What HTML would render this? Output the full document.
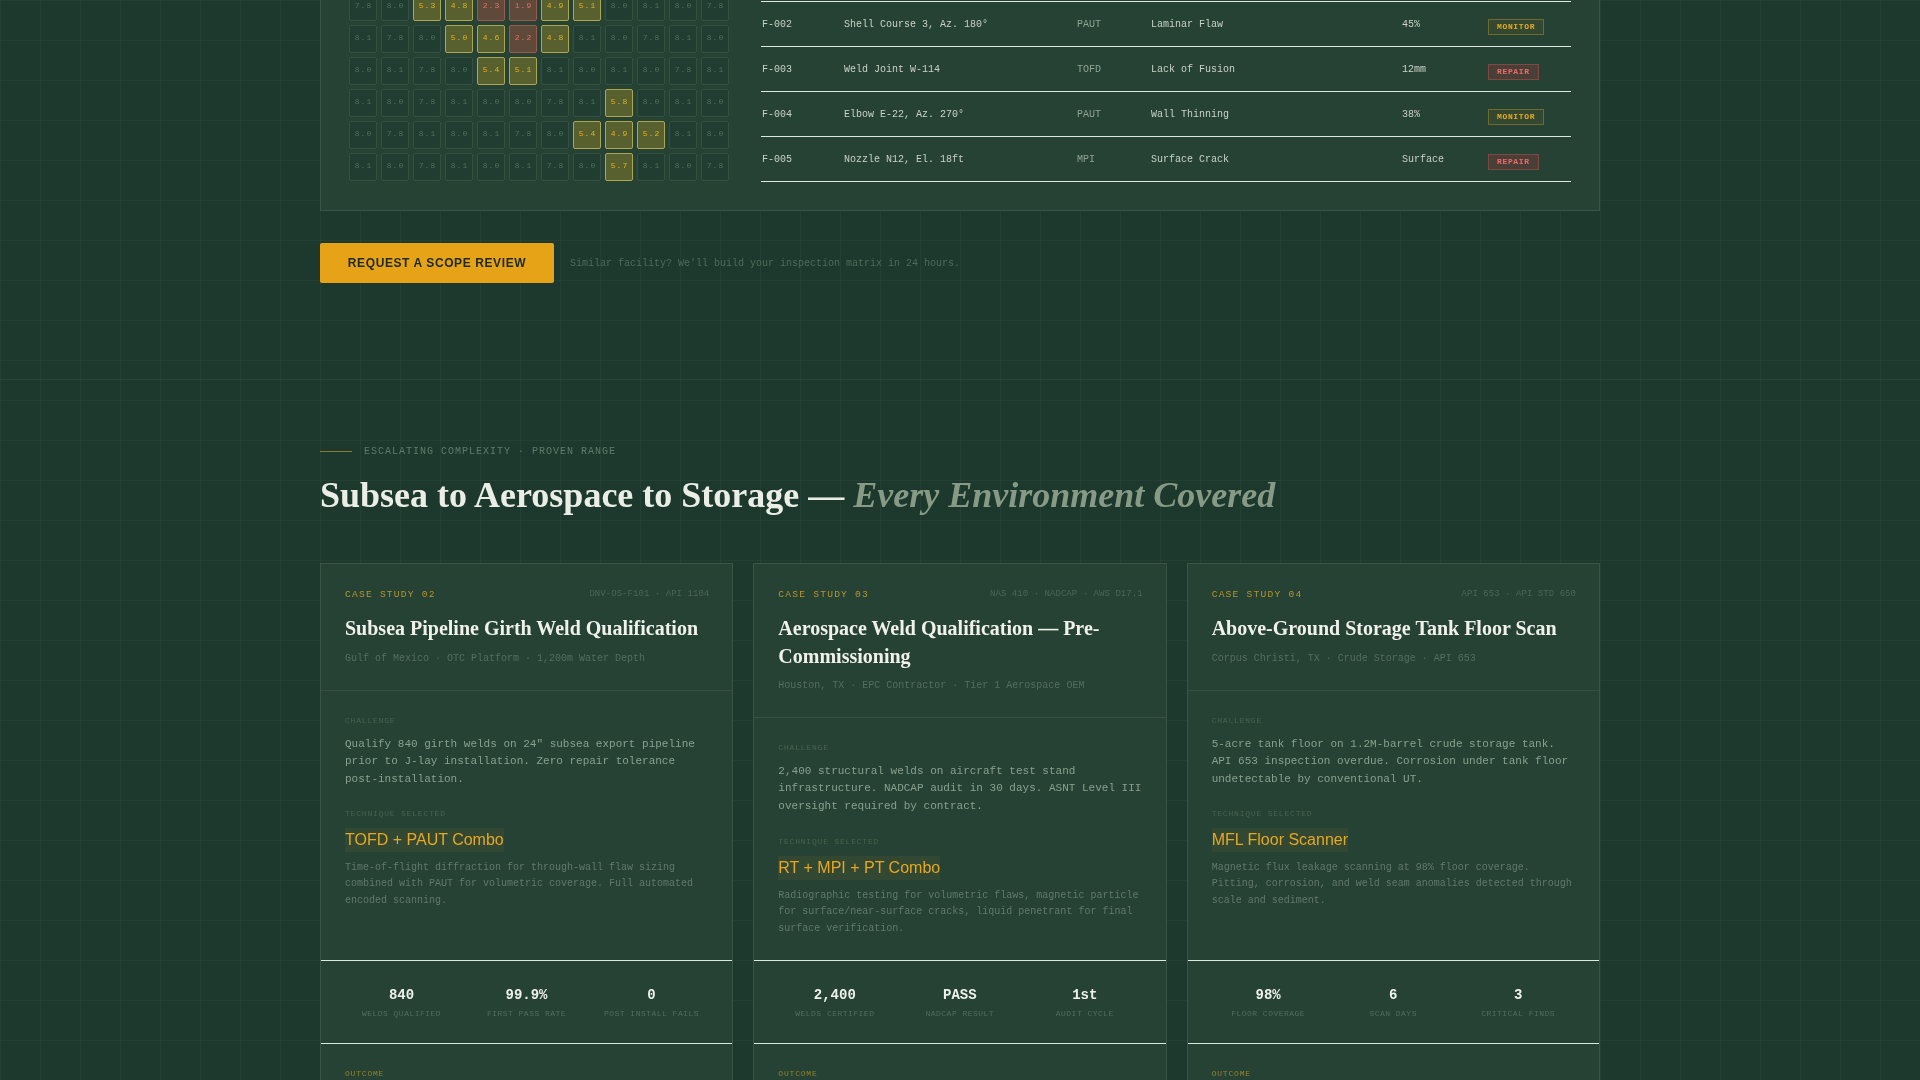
<!DOCTYPE html>
<html lang="en">
<head>
<meta charset="utf-8">
<title>NDT Case Studies</title>
<style>
*{box-sizing:border-box;margin:0;padding:0}
html,body{width:1920px;height:1080px;overflow:hidden}
body{
  background-color:#1d392d;
  background-image:
    linear-gradient(rgba(232,236,228,0.035) 1px,transparent 1px),
    linear-gradient(90deg,rgba(232,236,228,0.035) 1px,transparent 1px);
  background-size:40px 40px;
  font-family:"Liberation Mono",monospace;
  color:#e8ece4;
  position:relative;
}
#root{position:absolute;left:0;top:0;width:1920px;height:1080px;overflow:hidden;will-change:transform}
.abs{position:absolute}
/* ---------- top panel ---------- */
.panel{left:320px;top:-60px;width:1280px;height:271px;background:#264234;border:1px solid #3a5446}
.hm{left:349px;top:-7px;width:380px;display:grid;grid-template-columns:repeat(12,28px);grid-auto-rows:28px;gap:4px}
.hm i{display:block;font-style:normal;border:1px solid #35503f;background:#213c30;border-radius:2px;font-size:8px;letter-spacing:1.1px;text-indent:1px;line-height:24.5px;text-align:center;color:#4f6e5d}
.hm i.y{background:#586030;border-color:#aca64e;color:#e3b023}
.hm i.r{background:#5e493a;border-color:#9c5a4e;color:#e2716c}
/* table */
.tbl{left:761px;top:1px;width:810px}
.tr{position:relative;height:45px;border-top:1px solid #dbe9df;font-size:10px;line-height:12px;color:#c9d2c6}
.tr:last-child{height:46px;border-bottom:1px solid #dbe9df}
.tr span{position:absolute;top:17px;white-space:nowrap}
.c1{left:1px}.c2{left:83px}.c3{left:316px;color:#8fa393}.c4{left:390px}.c5{left:641px}
.tr b{position:absolute;left:727px;top:17px;height:16px;padding:0 8px;font-size:8px;line-height:14px;letter-spacing:.64px;border:1px solid;font-weight:bold}
.mon{color:#e8a81e;border-color:#6f6b30!important;background:#34482f}
.rep{color:#ee6a6a;border-color:#7e4942!important;background:#4a3f37}
/* ---------- CTA ---------- */
.btn{left:320px;top:243px;width:234px;height:40px;background:#e7a318;border-radius:2px;color:#1c2a22;font-family:"Liberation Sans",sans-serif;font-weight:bold;font-size:12px;line-height:40px;text-align:center;letter-spacing:.6px}
.note{left:570px;top:257px;font-size:10px;line-height:14px;color:#4e6a5a;white-space:nowrap}
/* ---------- heading ---------- */
.rule{left:320px;top:451px;width:32px;height:1px;background:#8a7a2a}
.eyebrow{left:364px;top:445px;font-size:10px;line-height:14px;letter-spacing:1px;color:#5f7a6a;white-space:nowrap}
h2{left:320px;top:472px;font-family:"Liberation Serif",serif;font-weight:bold;font-size:36px;line-height:46px;color:#ebeee6;white-space:nowrap}
h2 em{color:#879a86;font-style:italic}
/* ---------- cards ---------- */
.card{top:563px;width:413.34px;height:560px;background:#264234;border:1px solid #3a5446}
.k1{left:320px}.k2{left:753.33px}.k3{left:1186.67px}
.card .cs{left:24px;top:25px;font-size:9.6px;line-height:12px;letter-spacing:1.22px;color:#b5952a;white-space:nowrap}
.card .std{right:23px;top:24px;font-size:9px;line-height:12px;letter-spacing:.05px;color:#4a6555;white-space:nowrap}
.card h3{left:24px;top:50px;width:364px;font-family:"Liberation Serif",serif;font-weight:bold;font-size:20px;line-height:28px;color:#f0f2ea}
.card .loc{left:24px;font-size:10px;line-height:14px;color:#536e5f;white-space:nowrap}
.card .hr{left:0;right:0;height:1px;background:#35503f}
.card .lab{left:24px;font-size:8px;line-height:10px;letter-spacing:.8px;color:#47624f;white-space:nowrap}
.card .ch{left:24px;width:364px;font-size:11px;line-height:17.6px;color:#88a08e}
.card .tn{left:24px;font-family:"Liberation Sans",sans-serif;font-size:16px;line-height:24px;color:#e6a822;background:rgba(232,166,30,.065);white-space:nowrap}
.card .td{left:24px;width:364px;font-size:10px;line-height:16.3px;color:#60796a}
.card .bl{left:0;right:0;height:1px;background:#dbe9df}
.st{top:397px;left:24px;width:363px;height:83px;display:grid;grid-template-columns:repeat(3,1fr);column-gap:12px}
.st div{text-align:center;padding-top:26px;min-width:0}
.st b{display:block;font-size:14px;line-height:16px;color:#eef1ea;font-weight:bold}
.st u{display:block;text-decoration:none;font-size:8px;line-height:10px;letter-spacing:.48px;color:#4f6d5c;margin-top:6px;white-space:nowrap}
.card .out{left:24px;top:505px;font-size:8px;line-height:10px;letter-spacing:.8px;color:#94822c}
</style>
</head>
<body>
<div id="root">

<div class="abs panel"></div>
<div class="abs hm">
<i>7.8</i><i>8.0</i><i class="y">5.3</i><i class="y">4.8</i><i class="r">2.3</i><i class="r">1.9</i><i class="y">4.9</i><i class="y">5.1</i><i>8.0</i><i>8.1</i><i>8.0</i><i>7.8</i>
<i>8.1</i><i>7.8</i><i>8.0</i><i class="y">5.0</i><i class="y">4.6</i><i class="r">2.2</i><i class="y">4.8</i><i>8.1</i><i>8.0</i><i>7.8</i><i>8.1</i><i>8.0</i>
<i>8.0</i><i>8.1</i><i>7.8</i><i>8.0</i><i class="y">5.4</i><i class="y">5.1</i><i>8.1</i><i>8.0</i><i>8.1</i><i>8.0</i><i>7.8</i><i>8.1</i>
<i>8.1</i><i>8.0</i><i>7.8</i><i>8.1</i><i>8.0</i><i>8.0</i><i>7.8</i><i>8.1</i><i class="y">5.8</i><i>8.0</i><i>8.1</i><i>8.0</i>
<i>8.0</i><i>7.8</i><i>8.1</i><i>8.0</i><i>8.1</i><i>7.8</i><i>8.0</i><i class="y">5.4</i><i class="y">4.9</i><i class="y">5.2</i><i>8.1</i><i>8.0</i>
<i>8.1</i><i>8.0</i><i>7.8</i><i>8.1</i><i>8.0</i><i>8.1</i><i>7.8</i><i>8.0</i><i class="y">5.7</i><i>8.1</i><i>8.0</i><i>7.8</i>
</div>
<div class="abs tbl">
<div class="tr"><span class="c1">F-002</span><span class="c2">Shell Course 3, Az. 180°</span><span class="c3">PAUT</span><span class="c4">Laminar Flaw</span><span class="c5">45%</span><b class="mon">MONITOR</b></div>
<div class="tr"><span class="c1">F-003</span><span class="c2">Weld Joint W-114</span><span class="c3">TOFD</span><span class="c4">Lack of Fusion</span><span class="c5">12mm</span><b class="rep">REPAIR</b></div>
<div class="tr"><span class="c1">F-004</span><span class="c2">Elbow E-22, Az. 270°</span><span class="c3">PAUT</span><span class="c4">Wall Thinning</span><span class="c5">38%</span><b class="mon">MONITOR</b></div>
<div class="tr"><span class="c1">F-005</span><span class="c2">Nozzle N12, El. 18ft</span><span class="c3">MPI</span><span class="c4">Surface Crack</span><span class="c5">Surface</span><b class="rep">REPAIR</b></div>
</div>

<div class="abs btn">REQUEST A SCOPE REVIEW</div>
<div class="abs note">Similar facility? We'll build your inspection matrix in 24 hours.</div>

<div class="abs" style="left:0;top:379px;width:1920px;height:1px;background:#2a4638"></div>
<div class="abs rule"></div>
<div class="abs eyebrow">ESCALATING COMPLEXITY · PROVEN RANGE</div>
<h2 class="abs">Subsea to Aerospace to Storage — <em>Every Environment Covered</em></h2>

<div class="abs card k1">
<div class="abs cs">CASE STUDY 02</div>
<div class="abs std">DNV-OS-F101 · API 1104</div>
<h3 class="abs">Subsea Pipeline Girth Weld Qualification</h3>
<div class="abs loc" style="top:88px">Gulf of Mexico · OTC Platform · 1,200m Water Depth</div>
<div class="abs hr" style="top:126px"></div>
<div class="abs lab" style="top:152px">CHALLENGE</div>
<div class="abs ch" style="top:171.6px">Qualify 840 girth welds on 24" subsea export pipeline prior to J-lay installation. Zero repair tolerance post-installation.</div>
<div class="abs lab" style="top:245px">TECHNIQUE SELECTED</div>
<div class="abs tn" style="top:264px">TOFD + PAUT Combo</div>
<div class="abs td" style="top:296px">Time-of-flight diffraction for through-wall flaw sizing combined with PAUT for volumetric coverage. Full automated encoded scanning.</div>
<div class="abs bl" style="top:396px"></div>
<div class="abs st"><div><b>840</b><u>WELDS QUALIFIED</u></div><div><b>99.9%</b><u>FIRST PASS RATE</u></div><div><b>0</b><u>POST INSTALL FAILS</u></div></div>
<div class="abs bl" style="top:479px"></div>
<div class="abs out">OUTCOME</div>
</div>
<div class="abs card k2">
<div class="abs cs">CASE STUDY 03</div>
<div class="abs std">NAS 410 · NADCAP · AWS D17.1</div>
<h3 class="abs">Aerospace Weld Qualification — Pre-Commissioning</h3>
<div class="abs loc" style="top:115px">Houston, TX · EPC Contractor · Tier 1 Aerospace OEM</div>
<div class="abs hr" style="top:153px"></div>
<div class="abs lab" style="top:179px">CHALLENGE</div>
<div class="abs ch" style="top:198.6px">2,400 structural welds on aircraft test stand infrastructure. NADCAP audit in 30 days. ASNT Level III oversight required by contract.</div>
<div class="abs lab" style="top:273px">TECHNIQUE SELECTED</div>
<div class="abs tn" style="top:292px">RT + MPI + PT Combo</div>
<div class="abs td" style="top:324px">Radiographic testing for volumetric flaws, magnetic particle for surface/near-surface cracks, liquid penetrant for final surface verification.</div>
<div class="abs bl" style="top:396px"></div>
<div class="abs st"><div><b>2,400</b><u>WELDS CERTIFIED</u></div><div><b>PASS</b><u>NADCAP RESULT</u></div><div><b>1st</b><u>AUDIT CYCLE</u></div></div>
<div class="abs bl" style="top:479px"></div>
<div class="abs out">OUTCOME</div>
</div>
<div class="abs card k3">
<div class="abs cs">CASE STUDY 04</div>
<div class="abs std">API 653 · API STD 650</div>
<h3 class="abs">Above-Ground Storage Tank Floor Scan</h3>
<div class="abs loc" style="top:88px">Corpus Christi, TX · Crude Storage · API 653</div>
<div class="abs hr" style="top:126px"></div>
<div class="abs lab" style="top:152px">CHALLENGE</div>
<div class="abs ch" style="top:171.6px">5-acre tank floor on 1.2M-barrel crude storage tank. API 653 inspection overdue. Corrosion under tank floor undetectable by conventional UT.</div>
<div class="abs lab" style="top:245px">TECHNIQUE SELECTED</div>
<div class="abs tn" style="top:264px">MFL Floor Scanner</div>
<div class="abs td" style="top:296px">Magnetic flux leakage scanning at 98% floor coverage. Pitting, corrosion, and weld seam anomalies detected through scale and sediment.</div>
<div class="abs bl" style="top:396px"></div>
<div class="abs st"><div><b>98%</b><u>FLOOR COVERAGE</u></div><div><b>6</b><u>SCAN DAYS</u></div><div><b>3</b><u>CRITICAL FINDS</u></div></div>
<div class="abs bl" style="top:479px"></div>
<div class="abs out">OUTCOME</div>
</div>

</div>
</body>
</html>
